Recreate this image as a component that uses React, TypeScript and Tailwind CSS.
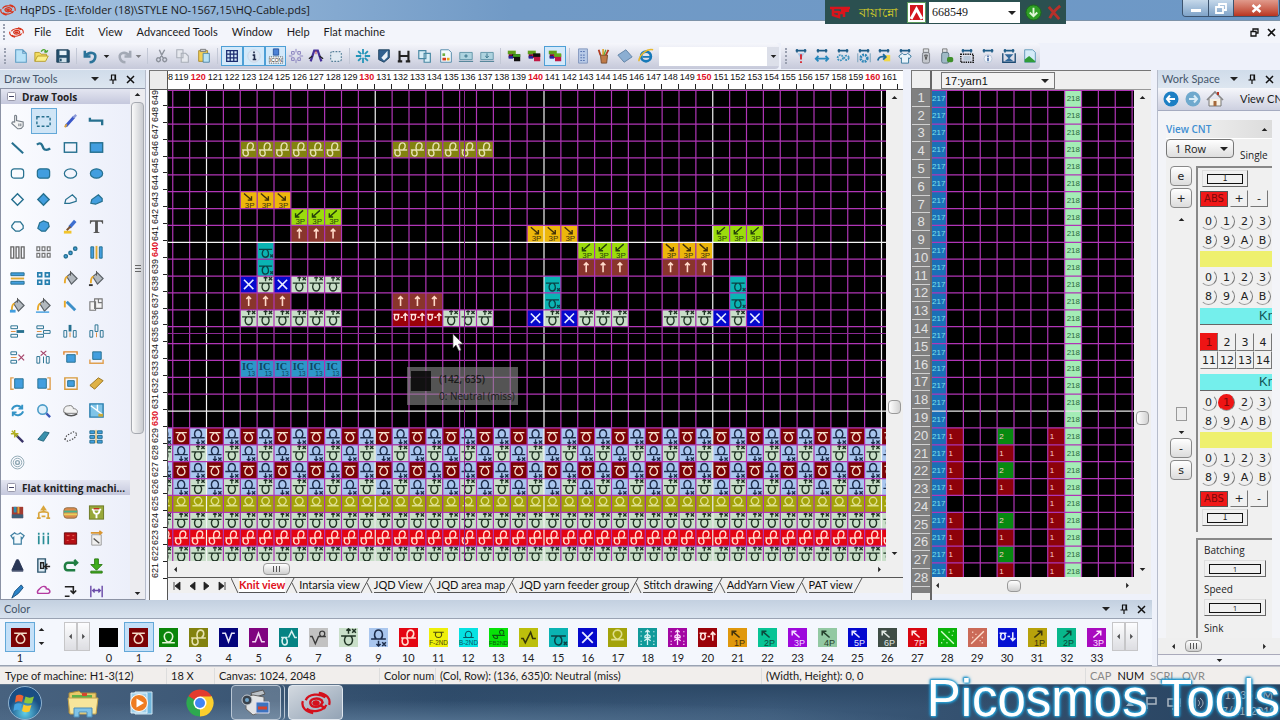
import React from "react";
import type { ReactNode } from "react";

const TEAL = "#26708f";
const SKY = "#429edf";

function Icon({ children, size = 18, label }: { children: ReactNode; size?: number; label?: string }) {
  return (
    <svg width={size} height={size} viewBox="0 0 18 18" fill="none" role={label ? "img" : undefined} aria-label={label} aria-hidden={label ? undefined : true}>
      {children}
    </svg>
  );
}

/* ---------- stitch symbols ---------- */

type Stitch = { bg: string; fg: string; art: (c: string) => ReactNode };

const LOOP_DOWN = "M3 5H8C10 5 13 8 13 10.5A4 4 0 0 1 5 10.5C5 8 8 5 10 5H15";
const LOOP_UP = "M3 14H8C10 14 13 11 13 8A4 4 0 0 0 5 8C5 11 8 14 10 14H15";
const stroke = (c: string, w = 1.5) => ({ stroke: c, strokeWidth: w, fill: "none" });
const word = (c: string, t: string, size = 8, x = 9, y = 17) => (
  <text x={x} y={y} fontSize={size} textAnchor="middle" fill={c} fontFamily="Liberation Sans, sans-serif">{t}</text>
);
const double = (c: string) => (
  <path d="M2 9.5H16M8 9C7 7 7.5 2 11 2S15 7 12 9M4 9.5C2 12 3 16 6 16S9.500 12 7 9.500" {...stroke(c)} />
);
const upX = (c: string) => (
  <path d="M9 5.500V0.800M7 2.500L9 0.800L11 2.500M12.500 1L16 4.500M16 1L12.500 4.500M2 7.500H16M7 7.500C4 10 5 16 9 16S14 10 11 7.500" {...stroke(c, 1.4)} />
);
const downX = (c: string) => (
  <path d="M9 12V17M7 15.200L9 17L11 15.200M12.500 13.500L16 17M16 13.500L12.500 17M2 10.500H16M7 10.500C4 8 5 2 9 2S14 8 11 10.500" {...stroke(c, 1.4)} />
);
const pair = (c: string, t: string) => (
  <>
    <path d="M4 3L11 9M4 7V3H8" {...stroke(c)} />
    {word(c, t, 8.5, 11)}
  </>
);
const pairR = (c: string, t: string) => (
  <>
    <path d="M6 9L13 3M9 3H13V7" {...stroke(c)} />
    {word(c, t, 8.5, 11)}
  </>
);
const star = (c: string) => (
  <path d="M9 2V16M7 4L9 2L11 4M6 8L9 6L12 8M6 12L9 10L12 12M6 9H12M3 3V4M15 3V4M3 7V8M15 7V8M3 12V13M15 12V13M3 16V15M15 16V15" {...stroke(c, 1.2)} />
);

const STITCH: Record<string, Stitch> = {
  "0": { bg: "#000000", fg: "#000000", art: () => null },
  "1": { bg: "#7b0305", fg: "#f3dcc8", art: (c) => <path d={LOOP_DOWN} {...stroke(c)} /> },
  "2": { bg: "#0a850a", fg: "#e4f4d8", art: (c) => <path d={LOOP_UP} {...stroke(c)} /> },
  "3": { bg: "#82820f", fg: "#e6e2b0", art: double },
  "4": { bg: "#04047c", fg: "#e8e8fa", art: (c) => <path d="M3 5H6L9 13L12 5H15" {...stroke(c)} /> },
  "5": { bg: "#800480", fg: "#f3d8f3", art: (c) => <path d="M3 13H6L9 5L12 13H15" {...stroke(c)} /> },
  "6": { bg: "#068383", fg: "#d5efef", art: (c) => <path d="M2 9H8M4 9C2 12 3 16 5.500 16S9 12 6 9M9 9L12 3L15 9H17" {...stroke(c)} /> },
  "7": { bg: "#c2c2c2", fg: "#3b3b3b", art: (c) => <path d="M1 8H3L6 15L9 8H16M11.500 8C9 6 10 3 12.500 3S16 6 13.500 8" {...stroke(c, 1.3)} /> },
  "8": { bg: "#c9dfc9", fg: "#1f3324", art: upX },
  "9": { bg: "#a9c6ee", fg: "#1c2c4a", art: downX },
  "10": { bg: "#e40613", fg: "#ffdccf", art: double },
  "11": { bg: "#eef00a", fg: "#4a4a10", art: (c) => <><path d="M4 4H14M7 4C5 6 6 9 9 9S13 6 11 4" {...stroke(c, 1)} />{word(c, "F-2ND", 6, 9, 16)}</> },
  "12": { bg: "#06e2e2", fg: "#0a5560", art: (c) => <><path d="M4 9H14M7 9C5 7 6 3 9 3S13 7 11 9" {...stroke(c, 1)} />{word(c, "B-2ND", 6, 9, 16)}</> },
  "13": { bg: "#08e208", fg: "#0a5a10", art: (c) => <><path d="M3 7H15M11 6C9 4 10 2 12 2S15 5 13 6M5 7C3 8 5 10 7 10S8 8 7 7" {...stroke(c, 1)} />{word(c, "FB2ND", 5.5, 9, 16)}</> },
  "14": { bg: "#bcbf0c", fg: "#35350a", art: (c) => <path d="M2 10H4L6 14L11 4L13 10H16" {...stroke(c)} /> },
  "15": { bg: "#0ab3b3", fg: "#0b4146", art: (c) => <path d="M2 7.500H16M8 7.500C4 10 5 16 9 16S13 10 10 7.500M14 13L17 16M17 13L14 16" {...stroke(c, 1.4)} /> },
  "16": { bg: "#0509cc", fg: "#e8ecff", art: (c) => <path d="M4 4L14 14M14 4L4 14" {...stroke(c, 1.7)} /> },
  "17": { bg: "#a3a30a", fg: "#dfdf8c", art: (c) => <path d="M3 11H8C10 11 13 8 13 6A4 4 0 0 0 5 6C5 8 8 11 10 11H15" {...stroke(c)} /> },
  "18": { bg: "#119a9a", fg: "#d9f4f4", art: star },
  "19": { bg: "#a306a3", fg: "#ffe0ff", art: star },
  "20": { bg: "#9b0209", fg: "#ffe6e0", art: (c) => <path d="M1.500 5H8M3.500 5C1.500 8 2.500 11 4.500 11S8 8 6 5M9 8H11.500M14 12V4M12 6.500L14 4L16.500 6.500" {...stroke(c)} /> },
  "21": { bg: "#e0980c", fg: "#43330c", art: (c) => pair(c, "1P") },
  "22": { bg: "#07c495", fg: "#0b4a3c", art: (c) => pair(c, "2P") },
  "23": { bg: "#9d08dc", fg: "#f2dcff", art: (c) => pair(c, "3P") },
  "24": { bg: "#93c9a3", fg: "#24402c", art: (c) => pair(c, "4P") },
  "25": { bg: "#0408cf", fg: "#e2e6ff", art: (c) => pair(c, "5P") },
  "26": { bg: "#3f4d46", fg: "#e0e8e2", art: (c) => pair(c, "6P") },
  "27": { bg: "#d80610", fg: "#ffe4e0", art: (c) => pair(c, "7P") },
  "28": { bg: "#0bb30b", fg: "#d8ffd0", art: (c) => <path d="M3 3L15 15M10 4H11M13 7H14M5 11H6M8 14H9M14 3H15M3 14H4" {...stroke(c, 1.3)} /> },
  "29": { bg: "#cb6a58", fg: "#ffe0d0", art: (c) => <path d="M15 3L3 15M4 4H5M7 6H8M11 12H12M13 14H14M4 9H5M13 9H14" {...stroke(c, 1.3)} /> },
  "30": { bg: "#0612d3", fg: "#e8ecff", art: (c) => <path d="M1.500 5H8M3.500 5C1.500 8 2.500 11 4.500 11S8 8 6 5M9 8H11.500M14 4V12M12 9.500L14 12L16.500 9.500" {...stroke(c)} /> },
  "31": { bg: "#b7a20b", fg: "#3c360c", art: (c) => pairR(c, "1P") },
  "32": { bg: "#08b78b", fg: "#0b4838", art: (c) => pairR(c, "2P") },
  "33": { bg: "#a80abf", fg: "#ffe4ff", art: (c) => pairR(c, "3P") },
  se: { bg: "#edb70b", fg: "#40300b", art: (c) => <><path d="M4 2L12 9M12 5V9H8" {...stroke(c)} />{word(c, "3P", 8.5, 10)}</> },
  sw: { bg: "#9bdc0c", fg: "#24400a", art: (c) => <><path d="M13 2L5 9M5 5V9H9" {...stroke(c)} />{word(c, "3P", 8.5, 10)}</> },
  up: { bg: "#89352c", fg: "#ffd9c8", art: (c) => <path d="M9 14V4M6.500 6.500L9 4L11.500 6.500" {...stroke(c, 1.7)} /> },
  ic: { bg: "#2d97c9", fg: "#0d4560", art: (c) => <><text x="8" y="10" fontSize="11" fontWeight="700" textAnchor="middle" fill={c} fontFamily="Liberation Serif, serif">IC</text>{word(c, "13", 7, 12, 17)}</> },
};

/* ---------- knit chart ---------- */

const CELL = 16.875;
const X0 = 4.75;
const Y0 = 0.4;
const span = (a: number, b: number) => Array.from({ length: b - a + 1 }, (_, i) => a + i);

const RUNS: [number, string, number, number][] = [
  [3, "3", 4, 9], [3, "3", 13, 18],
  [6, "se", 4, 6], [7, "sw", 7, 9], [8, "up", 7, 9],
  [8, "se", 21, 23], [8, "sw", 32, 34],
  [9, "15", 5, 5], [9, "sw", 24, 26], [9, "se", 29, 31],
  [10, "15", 5, 5], [10, "up", 24, 26], [10, "up", 29, 31],
  [11, "16", 4, 4], [11, "8", 5, 5], [11, "16", 6, 6], [11, "8", 7, 9], [11, "15", 22, 22], [11, "15", 33, 33],
  [12, "up", 4, 6], [12, "up", 13, 15], [12, "15", 22, 22], [12, "15", 33, 33],
  [13, "8", 4, 9], [13, "20", 13, 15], [13, "8", 16, 18], [13, "16", 21, 21], [13, "8", 22, 22], [13, "16", 23, 23],
  [13, "8", 24, 26], [13, "8", 29, 31], [13, "16", 32, 32], [13, "8", 33, 33], [13, "16", 34, 34],
  [16, "ic", 4, 9],
  [24, "17", -1, 42], [25, "8", -1, 42], [26, "10", -1, 42], [27, "8", -1, 42],
];

const CELLS = [
  ...RUNS.flatMap(([r, k, a, b]) => span(a, b).map((c) => ({ r, c, k }))),
  ...span(20, 23).flatMap((r) =>
    span(-1, 42).map((c) => {
      const even = c % 2 === 0;
      return { r, c, k: r % 2 === 0 ? (even ? "1" : "9") : even ? "9" : "8" };
    }),
  ),
];

function KnitChart() {
  const w = 720;
  const h = 474;
  return (
    <svg width={w} height={h} className="block shrink-0" role="img" aria-label="Knit chart">
      {CELLS.map(({ r, c, k }) => {
        const s = STITCH[k];
        return (
          <svg key={`${r}:${c}`} x={X0 + c * CELL} y={Y0 + r * CELL} width={CELL} height={CELL} viewBox="0 0 18 18">
            <rect width="18" height="18" fill={s.bg} />
            {s.art(s.fg)}
          </svg>
        );
      })}
      {span(0, 42).map((c) => (
        <path key={`v${c}`} d={`M${X0 + c * CELL} 0V${h}`} stroke={c % 10 === 2 ? "#f4f4f4" : "#b035b6"} strokeWidth="1.200" />
      ))}
      {span(0, 28).map((r) => (
        <path key={`h${r}`} d={`M0 ${Y0 + r * CELL}H${w}`} stroke={r % 10 === 9 ? "#f4f4f4" : "#b035b6"} strokeWidth="1.200" />
      ))}
      <path d={`M0 243.500H${w}M296.500 0V${h}`} stroke="#8a2a92" strokeWidth="1" />
    </svg>
  );
}

/* ---------- yarn chart ---------- */

const YARN: Record<number, (number | null)[]> = {
  20: [1, 2, 1], 21: [1, 1, 1], 22: [1, 2, 1], 23: [1, 1, 1], 24: [null, null, 1],
  25: [1, 2, 1], 26: [1, 1, 1], 27: [1, 2, 1], 28: [1, 1, 1],
};

function YarnChart() {
  const gx = (k: number) => 14.500 + k * CELL;
  const label = { fontSize: 8, fontFamily: "Liberation Sans, sans-serif" };
  return (
    <svg width="202" height="488" className="block shrink-0" role="img" aria-label="Yarn chart">
      <rect width="15" height="488" fill="#1b6fb6" />
      <rect x={gx(7)} width={CELL} height="488" fill="#a4ecb6" />
      {Object.entries(YARN).flatMap(([r, vals]) =>
        vals.map((v, i) =>
          v === null ? null : (
            <g key={`${r}-${i}`}>
              <rect x={gx(i * 3)} y={Y0 + Number(r) * CELL} width={CELL} height={CELL} fill={v === 2 ? "#078a10" : "#8d020a"} />
              <text x={gx(i * 3) + 2} y={Y0 + Number(r) * CELL + 11} fill="#ffd0c8" {...label}>{v}</text>
            </g>
          ),
        ),
      )}
      {span(0, 28).map((r) => (
        <g key={r}>
          <text x="0" y={Y0 + r * CELL + 11} fill="#7fe0e8" {...label}>217</text>
          <text x={gx(7) + 2} y={Y0 + r * CELL + 11} fill="#2d6a3c" {...label}>218</text>
          <path d={`M0 ${Y0 + r * CELL}H202`} stroke={r === 19 ? "#e8e8e8" : "#b035b6"} strokeWidth="1.200" />
        </g>
      ))}
      {span(0, 11).map((k) => (
        <path key={k} d={`M${gx(k)} 0V488`} stroke="#b035b6" strokeWidth="1.200" />
      ))}
    </svg>
  );
}

/* ---------- shared chrome ---------- */

function Caret({ dir = "down", small = false }: { dir?: "down" | "up" | "left" | "right"; small?: boolean }) {
  const d = { down: "M1 3H9L5 7Z", up: "M1 7H9L5 3Z", left: "M7 1V9L3 5Z", right: "M3 1V9L7 5Z" }[dir];
  return (
    <svg width={small ? 7 : 10} height={small ? 7 : 10} viewBox="0 0 10 10" aria-hidden>
      <path d={d} fill="#222" />
    </svg>
  );
}

function PanelTools() {
  return (
    <div className="flex items-center gap-2">
      <button aria-label="Panel menu"><Caret /></button>
      <button aria-label="Pin panel">
        <svg width="10" height="10" viewBox="0 0 10 10" stroke="#111" fill="none"><path d="M3 1H7.500V6M3.500 1V6M7 1V6M1.500 6H8.500M5 6V10" strokeWidth="1.200" /></svg>
      </button>
      <button aria-label="Close panel">
        <svg width="9" height="9" viewBox="0 0 9 9" stroke="#111"><path d="M1 1L8 8M8 1L1 8" strokeWidth="1.500" /></svg>
      </button>
    </div>
  );
}

function HqLogo({ width, height, color = "#d8341c" }: { width: number; height: number; color?: string }) {
  return (
    <svg width={width} height={height} viewBox="0 0 32 26" preserveAspectRatio="none" fill="none" stroke={color} aria-hidden>
      <path d="M5 10C8 3 20 2 26 7M27 15C24 22 12 24 6 19M2 11C0 17 5 23 13 24M30 15C32 8 27 3 19 2" strokeWidth="2.400" />
      <path d="M22 10C17 6 9 9 10 13.500S20 19 23 12.500Z" strokeWidth="2.600" />
      <ellipse cx="16" cy="13" rx="3.500" ry="2.500" fill={color} />
      <path d="M20 15L26 19" strokeWidth="2.600" />
    </svg>
  );
}

/* ---------- toolbar ---------- */

type Tool = [string, ReactNode, boolean?];
const box = (d: string, c = TEAL, w = 1.5, f = "none") => <path d={d} stroke={c} strokeWidth={w} fill={f} />;

const FILE_TOOLS: Tool[] = [
  ["New", box("M3 2H11L15 6V16H3ZM11 2V6H15", "#5f9dc4", 1.2, "#b8e2f8")],
  ["Open", <><path d="M1 15V5H6L8 7H14V9" fill="#f2dc62" stroke="#b59a24" /><path d="M1 15L4 9H16L13 15Z" fill="#fbef8c" stroke="#b59a24" /><path d="M8 4C10 1 13 1 14 5M14 5L11.500 4M14 5L15.500 2.500" stroke="#4aa32e" strokeWidth="1.500" /></>],
  ["Save", <><path d="M2 2H15L16 3V16H2Z" fill="#24506d" stroke="#1c3d55" /><path d="M5 3H13V8H5Z" fill="#e6f2f9" /><path d="M5 11H13V16H5Z" fill="#cfe0ea" /><path d="M6.500 12V15" stroke="#24506d" strokeWidth="2" /></>],
];
const EDIT_TOOLS: Tool[] = [
  ["Cut", box("M6 2L10 11M12 2L7 11M5 11A2.200 2.200 0 1 0 5.100 11M12 11A2.200 2.200 0 1 0 12.100 11", "#8d929c", 1.6)],
  ["Copy", box("M2 2H9V11H2ZM7 6H12L15 9V16H7Z", "#a9aeb8", 1.2, "#e6e8ee")],
  ["Paste", <><path d="M3 3H13V15H3Z" fill="#f3cf56" stroke="#a8882a" /><path d="M5 1.500H11V4H5Z" fill="#c5cad2" stroke="#777" /><path d="M8 6H15V16H8Z" fill="#b9e2f5" stroke="#4a83a5" /></>],
];
const VIEW_TOOLS: Tool[] = [
  ["Grid", box("M3 3H15V15H3ZM7 3V15M11 3V15M3 7H15M3 11H15", "#1c2c70", 1.4), true],
  ["Info", <><circle cx="9" cy="9" r="7" fill="#dde7f5" stroke="#c8d4e4" /><path d="M9 4V6M7.500 8H9.500V13M7.500 13H11.500" stroke="#222c4c" strokeWidth="1.800" /></>, true],
  ["Icons", <><path d="M6 1H12V8H6Z" fill="#4d82d6" stroke="#25509c" /><path d="M1.500 10H16.500V17H1.500Z" fill="#fff" stroke="#333" strokeDasharray="1 1" /><text x="9" y="15.500" fontSize="5.500" textAnchor="middle" fill="#111" fontFamily="Liberation Sans">ICON</text></>, true],
  ["Center", box("M9 1V5M9 13V17M1 9H5M13 9H17M4 4H7V7H4ZM11 4H14V7H11ZM4 11H7V14H4ZM11 11H14V14H11Z", "#8a84c0", 1.1)],
  ["Mirror", <><path d="M3 15L7 3H11L15 15" stroke="#47319b" strokeWidth="2.500" /><path d="M1 12L5 9M17 12L13 9" stroke="#222" strokeWidth="1.500" /><path d="M9 3V7" stroke="#c73a3a" /></>],
  ["Select", <><rect x="3" y="4" width="12" height="11" rx="2" fill="#dfe9f1" stroke="#557f98" strokeDasharray="2 1.500" strokeWidth="1.300" /></>],
];
const STYLE_TOOLS: Tool[] = [
  ["Snow", box("M9 1V7M9 11V17M1 9H7M11 9H17M3.500 3.500L7 7M11 11L14.500 14.500M14.500 3.500L11 7M7 11L3.500 14.500", "#2294b8", 2)],
  ["Shield", <><path d="M3 2H15V11L9 16L3 13Z" fill="#31618f" stroke="#20435f" /><path d="M6 11L13 3V10L9 14Z" fill="#e9f1f7" /></>],
  ["Find", box("M4 3V15M14 3V15M4 9H14M2 15H7M11 15H16", "#222", 2.4)],
  ["Windows", box("M2 3H10V12H2ZM8 6H15V16H8Z", "#4888a3", 1.3, "#d9eef6")],
  ["Report", <><path d="M3 2H12L15 5V16H3Z" fill="#f4fafd" stroke="#4a83a5" /><path d="M5 6H8V9H5Z" fill="#6cae3c" /><path d="M5 11H9V14H5Z" fill="#d93a1e" /><path d="M10 11H13V14H10Z" fill="#e9a81a" /></>],
  ["Import", <><path d="M2 5H16V13H2Z" fill="#aed3df" stroke="#5d93a6" /><path d="M9 7V11M7 9H11M1 15H17" stroke="#2c6b83" /></>],
  ["Export", <><path d="M2 5H16V13H2Z" fill="#aed3df" stroke="#5d93a6" /><path d="M9 6V11M7 9L9 11L11 9M1 15H17" stroke="#2c6b83" /></>],
];
const layers = (last: string) => (
  <><path d="M2 3H11V7H2Z" fill="#5f9e1c" /><path d="M3 7H10V11H3Z" fill="#6a0d2c" /><path d="M7 7H16V15H9V11H7Z" fill={last} /><path d="M3 9H8V12H3Z" fill="#23229c" /></>
);
const LAYER_TOOLS: Tool[] = [
  ["Layer one", <>{layers("#101010")}<path d="M8 7H16V10H8Z" fill="#3a9d20" /></>],
  ["Layer two", <>{layers("#c01845")}<path d="M8 6H16V10H8Z" fill="#101010" /></>],
  ["Layer three", <>{layers("#c01845")}<path d="M8 6H16V10H8Z" fill="#5fae1c" /></>, true],
];
const HELP_TOOLS: Tool[] = [
  ["Calculator", <><path d="M4 1H14V17H4Z" fill="#b9cbe8" stroke="#7d93bb" /><path d="M6 4H12M6 8H12M6 11H12M6 14H12" stroke="#4868a8" strokeDasharray="2 1" /></>],
  ["Pens", <><path d="M5 8H13L12 17H6Z" fill="#bf7a48" stroke="#75482a" /><path d="M5 8L3 2M11 8L14 2" stroke="#b23c22" strokeWidth="2" /><path d="M8 8V1" stroke="#e0a83a" strokeWidth="2" /><path d="M9 8L11 2" stroke="#5fa53c" strokeWidth="1.500" /></>],
  ["Card", <path d="M1 8L10 2L17 10L8 16Z" fill="#8baed2" stroke="#5d7fa3" />],
  ["Internet Explorer", <><circle cx="9" cy="9.500" r="5.500" stroke="#1779b8" strokeWidth="3" /><path d="M5 10H14" stroke="#1779b8" strokeWidth="2" /><path d="M1 15C1 8 10 0 17 2" stroke="#e8b82c" strokeWidth="1.700" /></>],
];

const rail = <path d="M3 3H15M4.500 1V5M13.500 1V5" stroke="#1d5b86" strokeWidth="1.800" />;
const MACHINE_TOOLS: Tool[] = [
  ["Check", <>{rail}<path d="M5 6H13L9 12Z" fill="#a8c8e8" /><path d="M9 7V13M9 15V17" stroke="#d81e28" strokeWidth="2" /></>],
  ["Width", <>{rail}<path d="M2 12H16M5 9L2 12L5 15M13 9L16 12L13 15" stroke="#2788bd" strokeWidth="2" /></>],
  ["Settings", <>{rail}<circle cx="6" cy="11" r="3" stroke="#3e93bd" strokeWidth="2" strokeDasharray="2 1" /><circle cx="13" cy="11" r="2.500" stroke="#3e93bd" strokeWidth="2" strokeDasharray="2 1" /></>],
  ["Configure", <>{rail}<circle cx="9" cy="11.500" r="3.700" stroke="#2c86b8" strokeWidth="3" strokeDasharray="2 1" /><path d="M2 6V16M16 6V16" stroke="#6a9ab5" /></>],
  ["Convert", <>{rail}<path d="M9 8H16V15H9Z" fill="#f1d848" /><path d="M2 14C3 10 6 9 10 10M8 7L11 10L8 13" stroke="#1c6b9c" strokeWidth="2" /></>],
  ["Garment", <>{rail}<path d="M6 6L2 9L4 12L5 11V17H13V11L14 12L16 9L12 6C11 8 7 8 6 6Z" fill="#e8f3fa" stroke="#2f739a" /></>],
  ["Drive", <><path d="M6 1H12V5H6Z" fill="#dfe2e6" stroke="#777" /><rect x="5" y="5" width="8" height="12" rx="2" fill="#c4c7cd" stroke="#777b83" /><path d="M7.500 8H10.500L9 13Z" stroke="#444" /></>],
  ["Drive add", <><path d="M4 1H9V5H4Z" fill="#dfe2e6" stroke="#777" /><rect x="3" y="5" width="8" height="12" rx="2" fill="#9fbac6" stroke="#56707c" /><rect x="9" y="10" width="7" height="6" rx="2" fill="#3f8f2b" /></>],
  ["Region", <>{rail}<path d="M2 7H16V16H2Z" stroke="#111" strokeDasharray="1.500 1" strokeWidth="1.700" /><path d="M5 9H13V14H5Z" fill="#b9c8d8" /></>],
  ["Details", <>{rail}<circle cx="9" cy="12" r="4.500" fill="#eef3fa" stroke="#b5c2d5" /><path d="M9 8.500V10M9 11V15" stroke="#20488c" strokeWidth="1.500" /></>],
  ["Compile", <>{rail}<path d="M2 6V16H16V6" stroke="#1c4a73" strokeWidth="1.500" /><path d="M4 7H14L9 12ZM4 15L9 11L14 15Z" fill="#31689a" /></>],
  ["Picture", <><path d="M3 2H12L15 5V16H3Z" fill="#d5ecf8" stroke="#5a94b4" /><path d="M3 16V13L8 9L15 15V16Z" fill="#2f9c38" /></>],
];

function ToolGroup({ tools, className }: { tools: Tool[]; className: string }) {
  return (
    <div className={`flex shrink-0 ${className}`}>
      {tools.map(([label, art, on]) => (
        <button key={label} aria-label={label} title={label} className={`flex h-5 min-w-0 flex-1 items-center justify-center ${on ? "border border-[#4d9fd6] bg-[#d3e9fa]" : ""}`}>
          <Icon size={16}>{art}</Icon>
        </button>
      ))}
    </div>
  );
}
const Sep = () => <span className="mx-[3px] h-4 w-px shrink-0 bg-[#c3c8d6]" />;
const Grip = () => <span className="h-4 w-0 shrink-0 border-l-2 border-dotted border-[#9aa0b0]" />;

/* ---------- draw tools ---------- */

const rect = (fill = "none") => <rect x="2.500" y="4" width="13" height="10" stroke={TEAL} strokeWidth="1.500" fill={fill} />;
const bucket = (extra?: ReactNode) => (
  <><path d="M5 7L10 3L16 9L10 15Z" fill="#b2b8be" stroke="#5a6066" strokeWidth="1.200" /><path d="M9 1V6" stroke="#555" /><path d="M6 7C3 7 3 11 3 14" stroke="#e8a92a" strokeWidth="2" />{extra}</>
);
const DRAW: Tool[] = [
  ["Hand", box("M6 10V3.500C6 2 8 2 8 3.500V8L15 9.500V14C14 16 12 17 9 16.500L3 11C3 9 5 9 6 10M10.500 11V14M12.500 11V14", "#777f88", 1.2, "#f6f6f6")],
  ["Marquee", <rect x="2" y="4" width="14" height="10" stroke={TEAL} strokeWidth="1.500" strokeDasharray="3 2" />, true],
  ["Pencil", <><path d="M4 14L13 4" stroke="#3b58c8" strokeWidth="3" /><path d="M3 15L5 12" stroke="#d9a23a" strokeWidth="2" /><path d="M12 5L15 2" stroke="#8a99d8" strokeWidth="2.500" /></>],
  ["Polyline", box("M2 5V8H15V13", TEAL, 2.5)],
  ["Line", box("M3 4L15 15", TEAL, 2.2)],
  ["Curve", box("M2 6C7 2 8 8 9 10S14 12 16 10", TEAL, 2.5)],
  ["Rectangle", rect()],
  ["Filled rectangle", rect(SKY)],
  ["Rounded", <rect x="2.500" y="4" width="13" height="10" rx="3" stroke={TEAL} strokeWidth="1.300" />],
  ["Filled rounded", <rect x="2.500" y="4" width="13" height="10" rx="3" stroke={TEAL} strokeWidth="1.300" fill={SKY} />],
  ["Ellipse", <ellipse cx="9" cy="9" rx="6.500" ry="5" stroke={TEAL} strokeWidth="1.300" />],
  ["Filled ellipse", <ellipse cx="9" cy="9" rx="6.500" ry="5" stroke={TEAL} strokeWidth="1.300" fill={SKY} />],
  ["Diamond", box("M9 3L15 9L9 15L3 9Z")],
  ["Filled diamond", box("M9 3L15 9L9 15L3 9Z", TEAL, 1.5, SKY)],
  ["Polygon", box("M3 13L4 9L11 4L15 8V11L8 13Z", TEAL, 1.3)],
  ["Filled polygon", box("M3 13L4 9L11 4L15 8V11L8 14Z", TEAL, 1.3, SKY)],
  ["Octagon", box("M6 4H12L15 8V11L11 14H7L3 10V8Z", TEAL, 1.3)],
  ["Filled octagon", box("M5 5L9 3L14 5L15 9L11 14H7L3 11Z", TEAL, 1.3, SKY)],
  ["Brush", <><path d="M8 10L14 3" stroke="#3d6ed0" strokeWidth="3.500" /><path d="M5 13L9 9" stroke="#7a5230" strokeWidth="2" /><path d="M2 15H10" stroke="#f2c42c" strokeWidth="3" /></>],
  ["Text", <path d="M2 2.500H16V6H15C15 4 14 4 10.500 4V14.500L12.500 15.500V16H5.500V15.500L7.500 14.500V4C4 4 3 4 3 6H2Z" fill="#555" />],
  ["Columns", box("M2 3H5V15H2ZM7.500 3H10.500V15H7.500ZM13 3H16V15H13Z", "#666", 1.4)],
  ["Cells", box("M2 3H5V7H2ZM7.500 3H10.500V7H7.500ZM13 3H16V7H13ZM2 10H5V14H2ZM7.500 10H10.500V14H7.500ZM13 10H16V14H13Z", "#777", 1.3)],
  ["Spread", <><circle cx="4" cy="13" r="1.800" stroke={TEAL} strokeWidth="1.400" fill={SKY} /><circle cx="9" cy="9.500" r="1.800" stroke={TEAL} strokeWidth="1.400" fill={SKY} /><circle cx="14" cy="5" r="1.800" stroke={TEAL} strokeWidth="1.400" fill={SKY} /></>],
  ["Mirror horizontal", <><path d="M3 3H6V15H3ZM12 3H15V15H12Z" fill={SKY} stroke={TEAL} /><path d="M9 2V16" stroke="#e0a830" strokeWidth="2" /></>],
  ["Mirror vertical", <><path d="M2 3H16V6H2ZM2 12H16V15H2Z" fill={SKY} stroke={TEAL} /><path d="M2 9H16" stroke="#e0a830" strokeWidth="2" /></>],
  ["Four way", box("M3 3H7V7H3ZM11 3H15V7H11ZM3 11H7V15H3ZM11 11H15V15H11Z", "#277fae", 1.8)],
  ["Fill", bucket()],
  ["Fill region", bucket(<path d="M1 16H5" stroke="#333" strokeWidth="2" />)],
  ["Fill color", bucket(<path d="M1 15H7" stroke={SKY} strokeWidth="3" />)],
  ["Fill row", bucket(<path d="M1 16H15" stroke={SKY} strokeWidth="1.500" />)],
  ["Dropper", <><path d="M5 5L14 14" stroke="#3d8fc8" strokeWidth="3" /><path d="M3 4V11" stroke="#e8a92a" strokeWidth="2" /></>],
  ["Duplicate", box("M2 5H8V14H2ZM7 2H15V12H7ZM11 2V6H15", "#777", 1.2, "#f6f6f6")],
  ["Insert row", <><path d="M2 3H9V6H2ZM2 12H9V15H2Z" stroke={TEAL} /><path d="M8 9H16" stroke={TEAL} strokeWidth="3" /><path d="M2 9H7" stroke="#df8a3a" /></>],
  ["Insert blank row", <><path d="M2 3H9V6H2ZM2 12H9V15H2ZM9 8H16V11H9Z" stroke={TEAL} /><path d="M2 9H7" stroke="#df8a3a" /></>],
  ["Insert column", <><path d="M2 8H5V15H2ZM12 8H15V15H12Z" stroke={TEAL} /><path d="M8.500 2V9" stroke={TEAL} strokeWidth="3" /><path d="M8.500 10V15" stroke="#df8a3a" /></>],
  ["Insert blank column", <><path d="M2 8H5V15H2ZM13 8H16V15H13ZM7.500 2H10.500V9H7.500Z" stroke={TEAL} /><path d="M9 10V15" stroke="#df8a3a" /></>],
  ["Delete row", <><path d="M2 3H8V6H2ZM2 12H8V15H2Z" stroke={TEAL} /><path d="M8 9H2" stroke="#df8a3a" /><path d="M10 6L16 12M16 6L10 12" stroke="#a5446a" strokeWidth="1.300" /></>],
  ["Delete column", <><path d="M2 8H5V15H2ZM12 8H15V15H12ZM9 8V15" stroke={TEAL} /><path d="M6 2L12 7M12 2L6 7" stroke="#a5446a" strokeWidth="1.300" /></>],
  ["Align top", <><path d="M5 6H14V14H5Z" fill={SKY} stroke={TEAL} /><path d="M2 6V3H16V6" stroke="#e0862e" strokeWidth="1.500" /></>],
  ["Align bottom", <><path d="M5 3H14V11H5Z" fill={SKY} stroke={TEAL} /><path d="M2 11V15H16V11" stroke="#e0a050" strokeWidth="1.500" /></>],
  ["Align left", <><path d="M6 4H15V14H6Z" fill={SKY} stroke={TEAL} /><path d="M5 3H2V15H5" stroke="#e0a050" strokeWidth="1.500" /></>],
  ["Align right", <><path d="M3 4H12V14H3Z" fill={SKY} stroke={TEAL} /><path d="M13 3H16V15H13" stroke="#e0a050" strokeWidth="1.500" /></>],
  ["Frame", <><path d="M6 6H13V12H6Z" fill={SKY} stroke={TEAL} /><path d="M3 3H16V15H3Z" stroke="#d89a3a" strokeWidth="1.500" /></>],
  ["Gold bar", <path d="M2 11L11 3L16 6L7 15Z" fill="#dfb246" stroke="#9a7520" />],
  ["Rotate", box("M3 8C5 3 11 3 13 6M15 10C13 15 7 15 5 12M14 3V7H10M4 15V11H8", "#3594c6", 2)],
  ["Magnifier", <><circle cx="8" cy="8" r="5" stroke="#4b9cc8" strokeWidth="1.700" fill="#dff0fa" /><path d="M12 12L16 16" stroke="#3b58b8" strokeWidth="2.500" /></>],
  ["Cloud", <><path d="M2 11C1 6 4 4 7 4C10 3 12 5 12 7C16 7 17 10 16 12H5Z" fill="#f2f2f2" stroke="#777" /><path d="M3 12C7 15 12 15 16 12.500" stroke="#555" strokeWidth="1.500" /></>],
  ["Map", <><path d="M2 2H16V16H2Z" fill="#7fc4e8" stroke="#2b7fae" strokeWidth="1.500" /><path d="M3 4L15 13M10 3V10" stroke="#fff" strokeWidth="1.500" /><path d="M11 14H16" stroke="#c8a838" strokeWidth="3" /></>],
  ["Wand", <><path d="M7 7L15 15" stroke="#3a3468" strokeWidth="2.500" /><path d="M6 2V10M2 6H10M3 3L9 9" stroke="#b2b022" strokeWidth="1.500" /></>],
  ["Eraser", <path d="M3 12L10 4L15 5L9 14Z" fill="#3a91ad" stroke="#25667c" />],
  ["Lasso", <path d="M3 12L5 8L12 4L16 6L13 11L6 14Z" stroke="#444" strokeDasharray="1.500 1.500" strokeWidth="1.200" />],
  ["Blocks", <><path d="M2 3H7V6H2ZM2 8H7V11H2ZM2 13H7V16H2ZM10 3H15V6H10ZM10 8H15V11H10ZM10 13H15V16H10Z" fill={SKY} stroke={TEAL} /><path d="M8.500 2V16" stroke="#e0a830" /></>],
  ["Rings", <><circle cx="9" cy="9" r="6.800" stroke="#8fa8b4" /><circle cx="9" cy="9" r="4.500" stroke="#8fa8b4" /><circle cx="9" cy="9" r="2" stroke="#8fa8b4" strokeWidth="1.500" /></>],
];

const KNIT: Tool[] = [
  ["Book", <><path d="M3 3H15V15H3Z" fill="#a33b30" /><path d="M5 3H8V9H5Z" fill="#2c8fae" /><path d="M3 11H15V15H3Z" fill="#3e5f78" /><path d="M10 3V10" stroke="#e0a83a" strokeWidth="2" /></>],
  ["Group", box("M9 3L7 6H11ZM9 6V9M4 9L9 8L14 9M4 9V14M14 9V14M2 15H6M12 15H16M7 13H11", "#d9a53c", 1.8)],
  ["Stripes", <><rect x="2" y="4" width="14" height="11" rx="3" fill="#dc8b4c" stroke="#8b6c44" /><path d="M2 8H16" stroke="#4ab08a" strokeWidth="2" /><path d="M2 11H16" stroke="#e8cf5a" strokeWidth="2" /></>],
  ["Pattern", <><rect x="1.500" y="2" width="15" height="14" fill="#98a83a" stroke="#6c7a24" /><path d="M4 6H14M6 6C5 12 13 12 12 6M9 11V15" stroke="#fff" strokeWidth="2" /><path d="M6 5H12" stroke="#c03020" strokeWidth="1.500" /></>],
  ["Shirt", box("M6 3L2 6L4 9L5 8V15H13V8L14 9L16 6L12 3C11 5 7 5 6 3Z", "#3f7fa2", 1.3, "#f4fafd")],
  ["Needles", box("M4 3V5M9 3V5M14 3V5M4 6V15M9 6V15M14 6V15", "#2a8d96", 1.8)],
  ["Red pattern", <><path d="M2.500 3H15.500V15H2.500Z" fill="#b60f14" stroke="#6c0a0c" /><path d="M5 6H8M11 6H13M5 11H7M10 10H13" stroke="#e86a5a" /></>],
  ["Edit page", <><path d="M4 5H14V16H4Z" fill="#f0f0f0" stroke="#999" /><path d="M3 3H14M12 1L14.500 3L12 5" stroke="#d99632" strokeWidth="1.700" /><path d="M6 9L12 14" stroke="#555" strokeWidth="1.500" /></>],
  ["Cone", <path d="M8 3H10L15 14H3ZM3 15H15" fill="#293656" stroke="#293656" />],
  ["Send", <><path d="M3 2H11V16H3Z" fill="#dceaf3" stroke="#305870" strokeWidth="1.500" /><path d="M6 6H9V12H6ZM16 10H11M13 7L10.500 10L13 13" stroke="#222" strokeWidth="1.500" /></>],
  ["Redo knit", box("M13 3L16 6L13 9M16 6H6C2 6 2 14 6 14H14", "#1f7d42", 2.6)],
  ["Download", <path d="M7 2H11V8H15L9 14L3 8H7ZM3 15H15V17H3Z" fill="#3fae1c" stroke="#2a7a12" />],
  ["Feather", <path d="M3 16L6 9L13 2L15 5L10 11Z" fill="#2b83c8" stroke="#1b4f7c" />],
  ["Cloud shape", box("M3 11C1 8 5 7 6 5C8 3 12 3 12 6C16 6 17 10 14 11Z", "#b43aa0", 1.5)],
  ["Jump", box("M3 4H12V10M9 8L12 11L15 8M3 14H8", "#222", 1.7)],
  ["Distance", box("M3 3V15M15 3V15M5 8H13M7 6L5 8L7 10M11 6L13 8L11 10", "#6a4aa8", 1.5)],
];

function ToolGrid({ tools, className }: { tools: Tool[]; className: string }) {
  return (
    <div className={`grid shrink-0 auto-rows-fr grid-cols-4 pr-5 pl-[3px] ${className}`}>
      {tools.map(([label, art, on]) => (
        <button key={label} aria-label={label} title={label} className={`flex min-h-0 items-center justify-center ${on ? "border border-[#63a8d8] bg-[#cfe5f6]" : ""}`}>
          <Icon size={17}>{art}</Icon>
        </button>
      ))}
    </div>
  );
}

function SectionTitle({ children, className }: { children: ReactNode; className: string }) {
  return (
    <h2 className={`flex shrink-0 items-center gap-1.5 overflow-hidden bg-gradient-to-b from-[#e4e6f1] to-[#c5c8dd] pl-1.5 font-["Open_Sans",sans-serif] text-[10px] font-bold whitespace-nowrap text-[#222] ${className}`}>
      <svg className="shrink-0" width="9" height="9" viewBox="0 0 9 9" aria-hidden><rect x=".5" y=".5" width="8" height="8" rx="1" fill="#fff" stroke="#99a" /><path d="M2 4.500H7" stroke="#446" /></svg>
      {children}
    </h2>
  );
}

function DrawPanel() {
  return (
    <aside className="flex w-[146px] shrink-0 flex-col border-r border-[#b6bccb] bg-[#f2f4fc]">
      <div className="flex h-[18px] shrink-0 items-center justify-between bg-gradient-to-b from-[#d0dcea] to-[#dde6f0] pl-1 pr-2.5 text-[#45566b]">
        <h2>Draw Tools</h2>
        <PanelTools />
      </div>
      <div className="flex min-h-0 flex-1 border-y border-l border-[#8c93a5]">
        <div className="flex min-w-0 flex-1 flex-col overflow-hidden bg-gradient-to-r from-[#fbfcff] to-[#eceffa]">
          <SectionTitle className="h-[15px]">Draw Tools</SectionTitle>
          <ToolGrid tools={DRAW} className="mt-1 h-[368px]" />
          <SectionTitle className="mt-1 h-[15px]">Flat knitting machi...</SectionTitle>
          <ToolGrid tools={KNIT} className="mt-1 h-[106px]" />
        </div>
        <div className="flex w-[15px] shrink-0 flex-col items-center justify-between bg-[#ececf0] py-0.5">
          <Caret dir="up" small />
          <div className="mt-1 mb-auto flex h-[332px] w-[13px] items-center justify-center rounded-sm border border-[#a6a9b0] bg-gradient-to-r from-[#fafafa] to-[#c9cbd0]">
            <span className="h-[7px] w-1.5 border-y border-[#666] py-0.5"><span className="block h-px bg-[#666]" /></span>
          </div>
          <Caret small />
        </div>
      </div>
    </aside>
  );
}

/* ---------- centre ---------- */

const TABS = ["Knit view", "Intarsia view", "JQD View", "JQD area map", "JQD yarn feeder group", "Stitch drawing", "AddYarn View", "PAT view"];
const NAV = ["M3 1V9M9 1V9L4 5Z", "M8 1V9L3 5Z", "M2 1V9L7 5Z", "M1 1V9L6 5ZM7 1V9"];

function KnitView() {
  return (
    <main className="flex min-w-0 flex-1 border-l border-t border-[#777] bg-[#f0f0f0]">
      <div className="flex w-[18px] shrink-0 flex-col border-r border-[#555] bg-white">
        <div className="h-[19px] shrink-0 border-b border-[#555] bg-[#ececec]" />
        <ol className="flex h-[490px] shrink-0 flex-col font-['Liberation_Sans',sans-serif] text-[9px] leading-none text-[#111]">
          {span(0, 28).map((r) => (
            <li key={r} className={`flex min-h-0 flex-1 items-center justify-start border-b border-transparent pl-px ${r % 10 === 9 ? "font-bold text-[#e01028]" : ""}`}>
              <span className="rotate-180 [writing-mode:vertical-rl]">{649 - r}</span>
              <span className="ml-auto h-px w-1 self-end bg-[#222]" />
            </li>
          ))}
        </ol>
      </div>
      <div className="flex min-w-0 flex-1 flex-col">
        <div className="flex h-[19px] shrink-0 overflow-hidden border-b border-[#555] bg-white font-['Liberation_Sans',sans-serif] text-[9px] leading-3 text-[#111]">
          <span className="flex w-[5px] shrink-0 justify-end">8</span>
          <ol className="flex w-[725px] shrink-0">
            {span(119, 161).map((n) => (
              <li key={n} className={`flex min-w-0 flex-1 flex-col items-center ${n % 10 === 0 ? "font-bold text-[#e01028]" : ""}`}>
                <span>{n}</span>
                <span className="mt-auto h-[5px] w-px self-end bg-[#222]" />
              </li>
            ))}
          </ol>
        </div>
        <div className="flex min-h-0 flex-1">
          <div className="relative min-w-0 flex-1 overflow-hidden bg-black">
            <KnitChart />
            <div className="absolute top-[277px] left-[239px] flex h-[38px] w-[111px] gap-2 overflow-hidden bg-[#8c8c8c]/60 p-1 font-['Open_Sans',sans-serif] text-[10px] text-[#191919]">
              <span className="h-5 w-5 shrink-0 bg-black/80" />
              <p className="leading-[17px] whitespace-nowrap"><b className="font-semibold">(142, 635)</b><br />0: Neutral (miss)</p>
            </div>
            <svg className="absolute top-[243px] left-[284px]" width="12" height="19" viewBox="0 0 12 19" aria-hidden><path d="M1 1V15L4 12L7 18L9 17L6.500 11H11Z" fill="#fff" stroke="#555" strokeWidth=".6" /></svg>
          </div>
          <div className="flex w-[17px] shrink-0 flex-col items-center justify-between bg-[#efefef] py-1">
            <Caret dir="up" small />
            <span className="mt-auto mb-[136px] h-3.5 w-[13px] rounded-sm border border-[#999] bg-gradient-to-r from-white to-[#d2d2d2]" />
            <Caret small />
          </div>
        </div>
        <div className="flex h-4 shrink-0 items-center bg-[#efefef] pr-5 pl-1">
          <Caret dir="left" small />
          <span className="ml-[84px] flex h-3 w-[27px] items-center justify-center gap-0.5 rounded-sm border border-[#999] bg-gradient-to-b from-white to-[#cfcfcf]">
            {[0, 1, 2].map((i) => <i key={i} className="h-1.5 w-px bg-[#555]" />)}
          </span>
          <span className="flex-1" />
          <Caret dir="right" small />
        </div>
        <div className="flex h-4 shrink-0 items-stretch overflow-hidden border-t border-[#555] bg-[#f0f0f0] whitespace-nowrap">
          <div className="flex w-[63px] shrink-0 items-center justify-around">
            {NAV.map((d) => <button key={d} aria-label="Scroll tabs"><svg width="10" height="10" viewBox="0 0 10 10"><path d={d} fill="#222" stroke="#222" strokeWidth=".8" /></svg></button>)}
          </div>
          <div className="flex" role="tablist">
            {TABS.map((t, i) => (
              <React.Fragment key={t}>
                {i === 0 && <svg width="8" height="15" viewBox="0 0 8 15" aria-hidden><path d="M0 0L7 15" stroke="#555" /></svg>}
                <button role="tab" aria-selected={i === 0} className={`border-b border-[#555] leading-[14px] ${i === 0 ? "bg-white font-bold text-[#e01020]" : "text-[#111]"}`}>{t}</button>
                <svg width="14" height="15" viewBox="0 0 14 15" fill="none" aria-hidden><path d={i === TABS.length - 1 ? "M1 15L9 0" : "M1 15L9 0M7 5L12 15"} stroke="#555" /></svg>
              </React.Fragment>
            ))}
          </div>
        </div>
        <div className="h-[7px] shrink-0 bg-[#eef1fa]" />
      </div>
    </main>
  );
}

function YarnView() {
  return (
    <section className="ml-[8px] flex w-[240px] shrink-0 border-t border-l border-[#777] bg-[#efefef]" aria-label="Yarn">
      <div className="flex w-[18px] shrink-0 flex-col overflow-hidden">
        <div className="h-[18px] shrink-0 border-b border-[#777]" />
        <ol className="flex h-[498px] shrink-0 flex-col bg-[#808080] font-['Liberation_Sans',sans-serif] text-[13px] leading-none text-[#e2e2e2]">
          {span(1, 28).map((n) => (
            <li key={n} className="flex min-h-0 flex-1 items-center justify-center border-b border-[#d0d0d0]">{n}</li>
          ))}
        </ol>
        <div className="h-1.5 shrink-0 bg-[#808080]" />
      </div>
      <div className="flex min-w-0 flex-1 flex-col border-l-2 border-[#666]">
        <div className="flex h-[19px] shrink-0 items-end border-b border-[#999] pl-[9px]">
          <div className="relative h-[17px] w-[114px] border border-[#777] bg-[#f3f3f3]">
            <select aria-label="Yarn" className="h-4 w-full appearance-none bg-transparent pl-[3px] font-['Liberation_Sans',sans-serif] text-[11px] text-[#111] outline-none">
              <option>17:yarn1</option>
            </select>
            <span className="pointer-events-none absolute top-[3px] right-1 flex"><Caret /></span>
          </div>
        </div>
        <div className="flex min-h-0 flex-1">
          <div className="min-w-0 flex-1 overflow-hidden bg-black"><YarnChart /></div>
          <div className="flex w-[17px] shrink-0 flex-col items-center justify-between py-1">
            <Caret dir="up" small />
            <span className="mt-auto mb-[141px] h-3.5 w-[13px] rounded-sm border border-[#999] bg-gradient-to-r from-white to-[#d2d2d2]" />
            <Caret small />
          </div>
        </div>
        <div className="flex h-[17px] shrink-0 items-center px-0.5 pr-5">
          <Caret dir="left" small />
          <span className="ml-[66px] h-3 w-3.5 rounded-sm border border-[#999] bg-gradient-to-b from-white to-[#cfcfcf]" />
          <span className="flex-1" />
          <Caret dir="right" small />
        </div>
        <div className="h-[6px] shrink-0 bg-[#eef1fa]" />
      </div>
    </section>
  );
}

/* ---------- work space ---------- */

const Spin = ({ wide = false }: { wide?: boolean }) => (
  <button className={`h-[17px] shrink-0 border border-[#ddd] border-r-[#666] border-b-[#666] bg-[#f0f0f0] px-1 py-[3px] ${wide ? "w-[62px]" : "w-[46px]"}`}>
    <span className="block h-[10px] border border-[#111] text-center text-[8px] leading-[8px]">1</span>
  </button>
);
function Circles({ items, on }: { items: string; on?: string }) {
  return (
    <div className="flex h-[19px] shrink-0 items-center">
      {items.split("").map((t) => (
        <button key={t} className={`mr-[1px] h-[17px] w-[17px] shrink-0 rounded-full border border-transparent border-r-[#777] border-b-[#999] text-center leading-[15px] ${t === on ? "bg-[#ee1414] text-[#7c0808]" : ""}`}>{t}</button>
      ))}
    </div>
  );
}
const AbsRow = () => (
  <div className="flex h-[19px] shrink-0 items-center gap-0.5">
    <button className="h-4 w-7 border border-[#555] bg-[#f01818] text-[10px] leading-[14px] text-[#7a0a0a]">ABS</button>
    <button className="h-[17px] w-[18px] border border-transparent border-r-[#777] border-b-[#777] leading-[14px]">+</button>
    <button className="h-[17px] w-[18px] border border-transparent border-r-[#777] border-b-[#777] leading-[14px]">-</button>
  </div>
);
const Yellow = () => <div className="my-px h-4 shrink-0 bg-[#eef06e]" />;
const Cyan = () => (
  <div className="mt-[2px] flex h-[17px] shrink-0 items-center overflow-hidden border-b border-[#666] bg-[#74efec] pl-[59px] font-['Liberation_Sans',sans-serif] text-[13px] text-[#155]">Knit</div>
);
function Numbers({ items, on }: { items: string[]; on?: string }) {
  return (
    <div className="flex h-[18px] shrink-0">
      {items.map((t) => <button key={t} className={`w-[18px] shrink-0 border border-transparent border-r-[#777] border-b-[#777] text-[11px] leading-[15px] ${t === on ? "bg-[#ee1414] text-[#7c0808]" : ""}`}>{t}</button>)}
    </div>
  );
}
const side = "flex h-5 w-[22px] shrink-0 items-center justify-center rounded-sm border border-[#888] bg-gradient-to-b from-white to-[#dcdcdc] leading-none";

function WorkSpace() {
  return (
    <aside className="ml-[6px] flex w-[123px] shrink-0 flex-col overflow-hidden border-l border-[#b6bccb] bg-[#f3f4f8]">
      <div className="flex h-[18px] shrink-0 items-center justify-between bg-gradient-to-b from-[#d0dcea] to-[#dde6f0] pr-1.5 pl-1 whitespace-nowrap text-[#45566b]">
        <h2>Work Space</h2>
        <PanelTools />
      </div>
      <div className="flex h-[23px] shrink-0 items-center gap-1 overflow-hidden border-b border-[#a5abc0] bg-gradient-to-b from-[#f6f7fb] to-[#cdd0e0] pl-1 whitespace-nowrap">
        <button aria-label="Back"><Icon size={18}><circle cx="9" cy="9" r="7.500" fill="#1c7fc4" /><path d="M13 9H5M8 5.500L5 9L8 12.500" stroke="#fff" strokeWidth="2" /></Icon></button>
        <button aria-label="Forward"><Icon size={18}><circle cx="9" cy="9" r="7.500" fill="#6fa9cd" /><path d="M5 9H13M10 5.500L13 9L10 12.500" stroke="#d9ecf7" strokeWidth="2" /></Icon></button>
        <button aria-label="Home"><Icon size={18}><path d="M3 9V16H15V9" fill="#f7f1e4" stroke="#777" /><path d="M1 10L9 2L17 10" stroke="#888" strokeWidth="1.700" /><path d="M7.500 11H10.500V16H7.500Z" fill="#a5693a" /><path d="M12 2V5" stroke="#b53420" strokeWidth="2" /></Icon></button>
        <span className="ml-3">View CNT</span>
      </div>
      <div className="mt-[9px] mr-2 ml-2 flex h-[18px] shrink-0 items-center justify-between bg-gradient-to-r from-[#f6f6f6] to-[#dcdcdc] pr-1">
        <h3 className="font-['Open_Sans',sans-serif] text-[10px] font-semibold text-[#3f8fd2]">View CNT</h3>
        <Caret dir="up" small />
      </div>
      <div className="mr-2 ml-2 flex min-h-0 flex-1 flex-col overflow-hidden border-t border-white bg-[#f0f0f0] font-['DejaVu_Sans',sans-serif] text-[11px] text-[#222]">
        <div className="flex h-[27px] shrink-0 overflow-hidden">
          <div className="relative h-[19px] w-[68px] shrink-0 rounded-sm border border-[#777] bg-gradient-to-b from-white to-[#dedede]">
            <select aria-label="Rows" className="h-[17px] w-full appearance-none bg-transparent pl-2 font-['Open_Sans',sans-serif] text-[11px] leading-none outline-none"><option>1 Row</option></select>
            <span className="pointer-events-none absolute top-1 right-1 flex"><Caret /></span>
          </div>
          <span className="ml-1.5 self-end pb-1 font-['Open_Sans',sans-serif] text-[10px] leading-[14px]">Single</span>
        </div>
        <div className="flex min-h-0 flex-1">
          <div className="flex w-[30px] shrink-0 flex-col items-center gap-0.5">
            <button className={side}>e</button>
            <button className={side}>+</button>
            <div className="mt-1.5 flex h-[220px] shrink-0 flex-col items-center">
              <Caret dir="up" small />
              <span className="mt-auto mb-2 h-3.5 w-[11px] border border-[#999] bg-[#eee]" />
              <Caret small />
            </div>
            <button className={side}>-</button>
            <button className={side}>s</button>
          </div>
          <div className="flex min-w-0 flex-1 flex-col">
            <div className="flex h-[366px] shrink-0 flex-col overflow-hidden border-t-2 border-l-2 border-[#888] pl-0.5">
              <div className="mt-0.5 mb-0.5 flex shrink-0 pl-0.5"><Spin /></div>
              <AbsRow />
              <div className="h-1 shrink-0" />
              <Circles items="0123" />
              <Circles items="89AB" />
              <Yellow />
              <Circles items="0123" />
              <Circles items="89AB" />
              <Cyan />
              <div className="h-2 shrink-0" />
              <Numbers items={["1", "2", "3", "4"]} on="1" />
              <Numbers items={["11", "12", "13", "14"]} />
              <div className="h-[3px] shrink-0" />
              <Cyan />
              <div className="h-0.5 shrink-0" />
              <Circles items="0123" on="1" />
              <Circles items="89AB" />
              <Yellow />
              <Circles items="0123" />
              <Circles items="89AB" />
              <div className="h-0.5 shrink-0" />
              <AbsRow />
              <div className="mt-px flex shrink-0 pl-0.5"><Spin /></div>
            </div>
            <div className="mt-1.5 flex min-h-0 flex-1 flex-col overflow-hidden border-t-2 border-l-2 border-[#888] pl-1.5 font-['Open_Sans',sans-serif] text-[10px]">
              <span className="h-5 shrink-0 leading-5">Batching</span><Spin wide />
              <span className="mt-0.5 h-5 shrink-0 leading-5">Speed</span><Spin wide />
              <span className="mt-0.5 h-5 shrink-0 leading-5">Sink</span>
            </div>
          </div>
        </div>
      </div>
      <div className="flex h-[16px] shrink-0 items-center bg-[#efefef] pr-3 pl-3">
        <Caret dir="left" small />
        <span className="ml-2 flex h-3 w-[17px] items-center justify-center gap-0.5 rounded-sm border border-[#999] bg-gradient-to-b from-white to-[#cfcfcf]">
          {[0, 1, 2].map((i) => <i key={i} className="h-1.5 w-px bg-[#555]" />)}
        </span>
        <span className="flex-1" />
        <Caret dir="right" small />
      </div>
      <button aria-label="More" className="flex h-[12px] shrink-0 items-center justify-center border-y border-[#aab]"><Caret small /></button>
    </aside>
  );
}

/* ---------- palette ---------- */

function Swatch({ k, on = false }: { k: string; on?: boolean }) {
  const s = STITCH[k];
  return (
    <button className="flex min-w-0 flex-1 flex-col items-center text-[11px] leading-3 text-[#222]">
      <span className={`flex h-[30px] w-[30px] items-center justify-center border ${on ? "border-[#63a8d8] bg-[#c4e0f8]" : "border-transparent"}`}>
        <svg width="19" height="19" viewBox="0 0 18 18" aria-hidden><rect width="18" height="18" fill={s.bg} />{s.art(s.fg)}</svg>
      </span>
      {k}
    </button>
  );
}
const Pager = () => (
  <div className="flex shrink-0">
    {(["left", "right"] as const).map((d) => (
      <button key={d} aria-label={`Scroll ${d}`} className="flex h-[29px] w-[13px] items-center justify-center border border-[#bbb] bg-gradient-to-b from-white to-[#d8d8dc] opacity-80"><Caret dir={d} small /></button>
    ))}
  </div>
);

function Palette() {
  return (
    <section className="flex h-[66px] w-[calc(100%-128px)] shrink-0 flex-col bg-[#f4f7fd]" aria-label="Color">
      <div className="flex h-[18px] shrink-0 items-center justify-between bg-gradient-to-b from-[#c3d0e0] to-[#d8e2ee] pr-1.5 pl-1 text-[#45566b]">
        <h2>Color</h2>
        <PanelTools />
      </div>
      <div className="flex flex-1 items-start border-y border-[#9aa3b3] pt-[3px] pl-[5px]">
        <div className="flex w-[30px] shrink-0"><Swatch k="1" on /></div>
        <div className="mr-[18px] ml-0.5 flex h-[29px] w-[9px] shrink-0 flex-col items-center justify-between py-1"><Caret dir="up" small /><Caret small /></div>
        <Pager />
        <div className="ml-[4px] flex min-w-0 flex-1">
          {span(0, 33).map((n) => <Swatch key={n} k={String(n)} on={n === 1} />)}
        </div>
        <Pager />
        <span className="w-[14px] shrink-0" />
      </div>
    </section>
  );
}

/* ---------- page ---------- */

const MENU = ["File", "Edit", "View", "Advanceed Tools", "Window", "Help", "Flat machine"];

export default function App() {
  return (
    <div className="relative flex h-screen min-h-[720px] flex-col overflow-hidden bg-[#eef1fa] font-['Lato','Open_Sans',sans-serif] text-[11px] leading-4 text-[#1b1b1b]">
      <header className="flex h-[21px] shrink-0 items-center gap-1 border-b border-[#7d93a8] bg-gradient-to-r from-[#a9c6e3] via-[#719ac6] via-40% to-[#6d98c6]">
        <HqLogo width={16} height={12} />
        <h1 className="flex-1 font-['Open_Sans',sans-serif] text-[11px]">HqPDS - [E:\folder (18)\STYLE NO-1567,15\HQ-Cable.pds]</h1>
        <div className="flex h-[17px] self-start overflow-hidden rounded-b border border-t-0 border-[#3c536e]">
          <button aria-label="Minimize" className="flex w-[26px] items-center justify-center border-r border-[#3c536e] bg-gradient-to-b from-[#c5d8ea] to-[#7fa3c8]"><span className="mt-1 h-[3px] w-2.5 bg-white" /></button>
          <button aria-label="Restore" className="flex w-[25px] items-center justify-center border-r border-[#3c536e] bg-gradient-to-b from-[#c5d8ea] to-[#7fa3c8]"><svg width="12" height="11" viewBox="0 0 12 11" fill="none" stroke="#fff" strokeWidth="1.800"><path d="M4 3V1H11V7H9M1 4H8V10H1Z" /></svg></button>
          <button aria-label="Close" className="mr-px flex w-[44px] items-center justify-center bg-gradient-to-b from-[#e09a8c] to-[#b8331f]"><svg width="11" height="9" viewBox="0 0 11 9" stroke="#fff" strokeWidth="2.400"><path d="M1.500 1L9.500 8M9.500 1L1.500 8" /></svg></button>
        </div>
      </header>

      <nav className="flex h-[22px] shrink-0 items-center gap-3.5 bg-[#f3f5fb] pl-[3px] pr-1">
        <span className="-mr-1 flex items-center gap-1"><Grip /><HqLogo width={15} height={11} /></span>
        {MENU.map((m) => <a key={m} href="#">{m}</a>)}
        <span className="flex-1" />
        <button aria-label="Restore document"><svg width="9" height="9" viewBox="0 0 9 9" fill="none" stroke="#111" strokeWidth="1.300"><path d="M3 3V1H8V5H6M1 3.500H6V8H1Z" /></svg></button>
        <button aria-label="Close document" className="-ml-1.5"><svg width="9" height="9" viewBox="0 0 9 9" stroke="#111" strokeWidth="1.600"><path d="M1 1L8 8M8 1L1 8" /></svg></button>
      </nav>

      <div className="flex h-[26px] shrink-0 items-stretch">
        <div className="flex w-[779px] shrink-0 items-center rounded-r bg-gradient-to-b from-[#f6f7fc] to-[#c6c9da] pl-1">
          <span className="flex w-1.5"><Grip /></span>
          <ToolGroup tools={FILE_TOOLS} className="w-[63px]" />
          <Sep />
          <button aria-label="Undo" className="ml-0.5"><Icon size={17}><path d="M3 3V9H9M3.500 8.500C8 3 15 5 14 10C13.500 13 11 15 8 15" stroke="#2b7399" strokeWidth="2.700" /></Icon></button>
          <button aria-label="Undo history" className="mx-1 flex"><Caret small /></button>
          <button aria-label="Redo" className="ml-0.5"><Icon size={17}><path d="M15 3V9H9M14.500 8.500C10 3 3 5 4 10C4.500 13 7 15 10 15" stroke="#a3a9b5" strokeWidth="2.700" /></Icon></button>
          <button aria-label="Redo history" className="mx-0.5 flex opacity-50"><Caret small /></button>
          <Sep />
          <ToolGroup tools={EDIT_TOOLS} className="w-[63px]" />
          <Sep />
          <ToolGroup tools={VIEW_TOOLS} className="w-[125px]" />
          <Sep />
          <ToolGroup tools={STYLE_TOOLS} className="w-[144px]" />
          <Sep />
          <ToolGroup tools={LAYER_TOOLS} className="w-[62px]" />
          <Sep />
          <ToolGroup tools={HELP_TOOLS} className="w-[83px]" />
          <div className="relative ml-[3px] h-[19px] min-w-0 flex-1 bg-white">
            <select aria-label="Search" className="h-full w-full appearance-none bg-transparent outline-none" />
            <span className="pointer-events-none absolute top-0 right-0 flex h-full w-3 items-center justify-center bg-[#dcdfe9]"><Caret small /></span>
          </div>
        </div>
        <div className="ml-0.5 flex w-[259px] shrink-0 items-center rounded-r bg-gradient-to-b from-[#f6f7fc] to-[#c6c9da] pl-1">
          <span className="flex w-1.5"><Grip /></span>
          <ToolGroup tools={MACHINE_TOOLS} className="w-[249px]" />
        </div>
      </div>

      <div className="flex min-h-0 flex-1">
        <div className="mt-px flex min-w-0 flex-1">
          <DrawPanel />
          <div className="w-[3px] shrink-0" />
          <KnitView />
          <YarnView />
        </div>
        <div className="z-10 mt-px -mb-[66px] flex"><WorkSpace /></div>
      </div>

      <Palette />

      <footer className="flex h-[18px] shrink-0 items-center overflow-hidden border-t border-[#c5c8d0] bg-[#f1eeec] whitespace-nowrap">
        <span className="w-[166px] shrink-0 pl-[5px]">Type of machine: H1-3(12)</span>
        <span className="w-[48px] shrink-0 border-l border-[#ddd] pl-1">18 X</span>
        <span className="w-[165px] shrink-0 border-l border-[#ddd] pl-1">Canvas: 1024, 2048</span>
        <span className="w-[56px] shrink-0 border-l border-[#ddd] pl-1">Color num</span>
        <span className="min-w-0 flex-1 border-l border-[#ddd] pl-1">(Col, Row): (136, 635)0: Neutral (miss)</span>
        <span className="w-[324px] shrink-0 border-l border-[#ddd] pl-1">(Width, Height): 0, 0</span>
        <span className="flex w-[195px] shrink-0 gap-1.5 border-l border-[#ddd] pl-1 text-[#888]"><span>CAP</span><span className="text-[#111]">NUM</span><span>SCRL</span><span>OVR</span></span>
      </footer>

      <div className="relative flex h-9 shrink-0 items-center overflow-hidden border-t border-[#60748a] bg-[radial-gradient(ellipse_at_30%_120%,#5b7a98_0%,transparent_45%),radial-gradient(ellipse_at_60%_0%,#2b4765_0%,transparent_50%),linear-gradient(90deg,#48627f,#304d6c_35%,#3c5a7a_60%,#27425f)]">
        <button aria-label="Start" className="ml-[7px]">
          <svg width="36" height="36" viewBox="0 0 36 36"><defs><radialGradient id="orb" cy="80%"><stop offset="0" stopColor="#5fd0ea" /><stop offset="1" stopColor="#1b4e83" /></radialGradient></defs><circle cx="18" cy="18" r="16.500" fill="url(#orb)" stroke="#8fb2cf" /><path d="M9 11C12 9 14 10 16.500 11L15 17C12.500 16 11 16 8 17.500Z" fill="#ef6234" /><path d="M18.500 11.500C21 13 24 13 27 11.500L25 18C22 19 20 18.500 17 17.500Z" fill="#8cc63e" /><path d="M7.500 19.500C10 18 12.500 18 15 19L13 25.500C11 24.500 9 24.500 6.500 26Z" fill="#45a5e4" /><path d="M16.500 19.500C19 21 22 21 24.500 20L22.500 26.500C20 27.500 17.500 27.500 15 26Z" fill="#fbc92c" /></svg>
        </button>
        <button aria-label="Explorer" className="ml-[24px]">
          <svg width="32" height="30" viewBox="0 0 32 30"><path d="M2 5L12 3L14 5H29V25H2Z" fill="#e9c968" stroke="#a8893c" /><path d="M5 7H25V12H5Z" fill="#5fb04a" /><path d="M15 5H20V8H15Z" fill="#d4482e" /><path d="M1 10H31L29 26H3Z" fill="#f7e59b" stroke="#c2a24e" /><path d="M7 29V20H25V29H20V24H12V29Z" fill="#7fc3e8" stroke="#4c8db8" /></svg>
        </button>
        <button aria-label="Media Player" className="ml-[28px]">
          <svg width="28" height="28" viewBox="0 0 28 28"><path d="M8 3H25V25H8Z" fill="#6fb5dc" stroke="#cfe6f3" /><path d="M4 4H20V24H4Z" fill="#9fd0ea" stroke="#e6f2fa" /><circle cx="12" cy="14" r="8.500" fill="#ef7c22" stroke="#fff" /><path d="M9.500 9.500V18.500L17 14Z" fill="#fff" /></svg>
        </button>
        <button aria-label="Chrome" className="ml-[31px]">
          <svg width="28" height="28" viewBox="0 0 28 28"><path d="M14 14L2.300 7.200A13.500 13.500 0 0 1 25.700 7.200Z" fill="#e33b2e" /><path d="M14 14L25.700 7.200A13.500 13.500 0 0 1 14 27.500Z" fill="#fbcf2e" /><path d="M14 14V27.500A13.500 13.500 0 0 1 2.300 7.200Z" fill="#2da94f" /><path d="M14 7.500H26L14 27.500Z" fill="#fbcf2e" /><circle cx="14" cy="14" r="6.500" fill="#fff" /><circle cx="14" cy="14" r="5" fill="#4285f4" /></svg>
        </button>
        <button aria-label="Camcorder" className="ml-[17px] flex h-[35px] w-[50px] items-center justify-center rounded border border-[#b9c6d4] bg-white/20">
          <svg width="30" height="28" viewBox="0 0 30 28"><path d="M10 4L22 1L24 5L12 9Z" fill="#bcc2c8" stroke="#555" /><path d="M5 8L12 6L23 8V22L12 26L5 20Z" fill="#e2e4e6" stroke="#666" /><circle cx="6" cy="11" r="5" fill="#39424c" stroke="#c5cad0" /><circle cx="6" cy="11" r="2" fill="#6ea2c8" /><path d="M15 13H28V24H15Z" fill="#3d73c0" stroke="#dde" /><path d="M17 19H26" stroke="#d8432c" strokeWidth="3" /></svg>
        </button>
        <span className="h-[35px] w-1 rounded-r border-r border-[#b9c6d4]" />
        <button aria-label="HqPDS" className="ml-[3px] flex h-[35px] w-[55px] items-center justify-center rounded border border-[#dfe6ee] bg-gradient-to-br from-[#d3d9e0] to-[#93a3b5]"><HqLogo width={30} height={24} color="#d4101c" /></button>
        <div className="absolute top-0 right-[4px] flex h-full items-center gap-1 opacity-60">
          <Icon><path d="M5 12L9 7L13 12Z" fill="#fff" /></Icon>
          <Icon><path d="M4 3V15M4 4H13V10H4" stroke="#fff" strokeWidth="1.500" /></Icon>
          <Icon><path d="M3 5H15V12H3ZM7 15H13" stroke="#fff" strokeWidth="1.500" /><path d="M10 10L15 15M15 10L10 15" stroke="#e01c1c" strokeWidth="2" /></Icon>
          <Icon><path d="M2 7H5L9 3V15L5 11H2Z" fill="#fff" /><path d="M11 6C13 8 13 10 11 12M13 4C17 7 17 11 13 14" stroke="#fff" /></Icon>
          <p className="ml-3 text-center leading-4 text-white">11:35 AM<br />7/21/2019</p>
        </div>
      </div>

      <div className="absolute top-0 right-[214px] flex h-[24px] w-[241px] items-center bg-[#2b5050]">
        <svg className="ml-1 shrink-0" width="22" height="18" viewBox="0 0 22 18" fill="none" stroke="#d9141c" strokeWidth="2.500" aria-hidden><path d="M1 5H21M4 5V12L10 14V8M10 10H16M15 5V14M4 9H10" /><path d="M12 7H20" strokeWidth="4" /></svg>
        <span className="ml-2 w-[42px] shrink-0 text-[13px] whitespace-nowrap text-[#d9cf28]" lang="bn">বায়ান্নো</span>
        <svg className="ml-1.5 shrink-0" width="19" height="21" viewBox="0 0 19 21" aria-hidden><rect x=".5" y=".5" width="18" height="20" fill="#fff" stroke="#5a9a5a" /><rect x="3" y="3" width="13" height="15" fill="#d3151c" /><path d="M4 17L9.500 7L15 17" stroke="#fff" strokeWidth="3" fill="none" /></svg>
        <div className="relative ml-[3px] h-[21px] w-[91px] shrink-0 bg-white">
          <select aria-label="Code" className="h-full w-full appearance-none bg-transparent pl-[3px] font-['Liberation_Serif',serif] text-[12px] outline-none"><option>668549</option></select>
          <span className="pointer-events-none absolute top-1.5 right-[3px] flex"><Caret /></span>
        </div>
        <button aria-label="Add" className="ml-[5px]"><Icon size={17}><circle cx="9" cy="9" r="8" fill="#2f9e26" stroke="#1b6a18" /><path d="M9 4V13M5 9L9 13L13 9" stroke="#dff5d8" strokeWidth="2" /></Icon></button>
        <button aria-label="Remove" className="ml-1"><Icon size={17}><path d="M3 3L14 16M15 2C10 6 6 10 4 15" stroke="#b6302a" strokeWidth="3" /></Icon></button>
      </div>

      <p className="pointer-events-none absolute right-0 -bottom-1 z-20 font-['Liberation_Sans',sans-serif] text-[51px] leading-[51px] whitespace-nowrap text-white [text-shadow:0_0_2px_#2fa3d6,0_0_3px_#2fa3d6,0_0_4px_#2fa3d6,1px_1px_2px_#1b7fb4,-1px_-1px_2px_#1b7fb4]">Picosmos Tools</p>
    </div>
  );
}
